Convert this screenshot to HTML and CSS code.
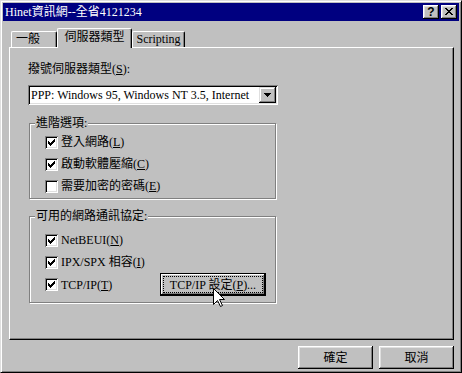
FILE: index.html
```html
<!DOCTYPE html>
<html lang="zh-Hant">
<head>
    <meta charset="UTF-8">
    <title>Hinet資訊網--全省4121234</title>
    <link rel="stylesheet" href="styles.css">
</head>
<body>
    <div class="window">
        <div class="titlebar">
            <span class="title">Hinet資訊網--全省4121234</span>
            <div class="caption-btns">
                <span class="cap-btn help">?</span>
                <span class="cap-btn">
                    <svg width="8" height="7" viewBox="0 0 8 7" shape-rendering="crispEdges">
                        <path d="M0 0h2v1h-2z M6 0h2v1h-2z M1 1h2v1h-2z M5 1h2v1h-2z M2 2h4v1h-4z M3 3h2v1h-2z M2 4h4v1h-4z M1 5h2v1h-2z M5 5h2v1h-2z M0 6h2v1h-2z M6 6h2v1h-2z" fill="#000"/>
                    </svg>
                </span>
            </div>
        </div>

        <div class="content">
            <!-- tab strip -->
            <div class="tabs">
                <div class="tab first">一般</div>
                <div class="tab active">伺服器類型</div>
                <div class="tab last">Scripting</div>
            </div>

            <div class="panel">
                <div class="field-label">撥號伺服器類型(<u>S</u>):</div>
                <div class="combo">
                    <span class="combo-text">PPP: Windows 95, Windows NT 3.5, Internet</span>
                    <span class="combo-btn">
                        <svg width="7" height="4" viewBox="0 0 7 4" shape-rendering="crispEdges">
                            <path d="M0 0h7v1h-7z M1 1h5v1h-5z M2 2h3v1h-3z M3 3h1v1h-1z" fill="#000"/>
                        </svg>
                    </span>
                </div>

                <div class="group group-adv">
                    <span class="legend">進階選項:</span>
                    <div class="row"><span class="check on"></span>登入網路(<u>L</u>)</div>
                    <div class="row"><span class="check on"></span>啟動軟體壓縮(<u>C</u>)</div>
                    <div class="row"><span class="check"></span>需要加密的密碼(<u>E</u>)</div>
                </div>

                <div class="group group-proto">
                    <span class="legend">可用的網路通訊協定:</span>
                    <div class="row"><span class="check on"></span>NetBEUI(<u>N</u>)</div>
                    <div class="row"><span class="check on"></span>IPX/SPX 相容(<u>I</u>)</div>
                    <div class="row">
                        <span class="check on"></span>TCP/IP(<u>T</u>)
                        <span class="btn default">TCP/IP 設定(<u>P</u>)...</span>
                    </div>
                </div>
            </div>

            <div class="actions">
                <span class="btn">確定</span>
                <span class="btn">取消</span>
            </div>
        </div>

        <!-- mouse pointer -->
        <svg class="cursor" width="13" height="20" viewBox="0 0 13 20">
            <polygon points="0.5,0.5 0.5,16.5 4.5,12.5 7.5,18.5 9.5,17.5 6.5,11.5 11.5,11.5" fill="#fff" stroke="#000" stroke-width="1"/>
        </svg>
    </div>
</body>
</html>
```

FILE: styles.css
```css
body {
    margin: 0;
    background: #c0c0c0;
    font-family: "Liberation Serif", "Noto Sans CJK TC", serif;
    font-size: 12px;
    line-height: 14px;
    color: #000;
}

.window {
    position: relative;
    width: 462px;
    height: 373px;
    box-sizing: border-box;
    border: 1px solid;
    border-color: #dfdfdf #000 #000 #dfdfdf;
    box-shadow: inset 1px 1px #fff, inset -1px -1px #808080;
    padding: 2px;
    background: #c0c0c0;
}

.titlebar {
    height: 18px;
    background: #000080;
    color: #fff;
    display: flex;
    align-items: center;
    justify-content: space-between;
    padding: 0 2px;
}

.caption-btns {
    display: flex;
    gap: 2px;
}

.cap-btn {
    width: 16px;
    height: 14px;
    box-sizing: border-box;
    background: #c0c0c0;
    box-shadow: inset -1px -1px #000, inset 1px 1px #fff, inset -2px -2px #808080, inset 2px 2px #dfdfdf;
    display: flex;
    align-items: center;
    justify-content: center;
    padding-bottom: 1px;
}

.help {
    color: #000;
    font-family: "Liberation Sans", sans-serif;
    font-weight: bold;
    font-size: 12px;
}

.content {
    padding: 7px 5px 0 6px;
}

/* tabs */
.tabs {
    display: flex;
    align-items: flex-end;
    height: 20px;
    padding-left: 2px;
    margin-bottom: -1px;
    position: relative;
    z-index: 1;
}

.tab {
    height: 16px;
    box-sizing: border-box;
    margin-bottom: 1px;
    border-top: 1px solid #fff;
    border-left: 1px solid #fff;
    border-right: 1px solid #000;
    border-radius: 2px 2px 0 0;
    box-shadow: inset -1px 0 #808080;
    background: #c0c0c0;
    text-align: center;
    white-space: nowrap;
}

.tab.first {
    width: 46px;
    text-align: left;
    padding-left: 4px;
}

.tab.active {
    width: 75px;
    height: 20px;
    margin-bottom: 0;
    padding-top: 1px;
}

.tab.last {
    width: 53px;
}

/* tab page */
.panel {
    height: 293px;
    box-sizing: border-box;
    border: 1px solid;
    border-color: #fff #000 #000 #fff;
    box-shadow: inset -1px -1px #808080;
    padding: 14px 0 0 18px;
}

.combo {
    margin-top: 9px;
    width: 250px;
    height: 20px;
    box-sizing: border-box;
    padding: 2px;
    background: #fff;
    box-shadow: inset 1px 1px #808080, inset -1px -1px #fff, inset 2px 2px #000, inset -2px -2px #dfdfdf;
    display: flex;
    align-items: center;
}

.combo-text {
    flex: 1;
    padding-left: 1px;
    white-space: nowrap;
    overflow: hidden;
}

.combo-btn {
    width: 17px;
    height: 16px;
    box-sizing: border-box;
    background: #c0c0c0;
    box-shadow: inset -1px -1px #000, inset 1px 1px #dfdfdf, inset -2px -2px #808080, inset 2px 2px #fff;
    display: flex;
    align-items: center;
    justify-content: center;
}

.group {
    position: relative;
    width: 247px;
    margin-left: 1px;
    box-sizing: border-box;
    border: 1px solid #808080;
    box-shadow: inset 1px 1px #fff, 1px 1px #fff;
    padding-left: 15px;
}

.group-adv {
    margin-top: 18px;
    height: 76px;
    padding-top: 7px;
}

.group-proto {
    margin-top: 17px;
    height: 87px;
    padding-top: 12px;
}

.legend {
    position: absolute;
    top: -8px;
    left: 5px;
    padding: 0 1px;
    background: #c0c0c0;
    white-space: nowrap;
}

.row {
    display: flex;
    align-items: center;
    min-height: 22px;
    white-space: nowrap;
}

.check {
    width: 13px;
    height: 13px;
    margin-right: 3px;
    flex-shrink: 0;
    background: #fff;
    box-shadow: inset 1px 1px #808080, inset -1px -1px #fff, inset 2px 2px #000, inset -2px -2px #dfdfdf;
}

.check.on {
    background: #fff url("data:image/svg+xml,%3Csvg xmlns='http://www.w3.org/2000/svg' width='13' height='13' shape-rendering='crispEdges'%3E%3Cpath d='M3 5h1v3h-1z M4 6h1v3h-1z M5 7h1v3h-1z M6 6h1v3h-1z M7 5h1v3h-1z M8 4h1v3h-1z M9 3h1v3h-1z' fill='%23000'/%3E%3C/svg%3E") no-repeat;
}

/* push buttons */
.btn {
    width: 75px;
    height: 23px;
    box-sizing: border-box;
    display: flex;
    align-items: center;
    justify-content: center;
    background: #c0c0c0;
    box-shadow: inset -1px -1px #000, inset 1px 1px #fff, inset -2px -2px #808080, inset 2px 2px #dfdfdf;
    white-space: nowrap;
}

.btn.default {
    width: 106px;
    margin-left: auto;
    margin-right: 9px;
    border: 1px solid #000;
    box-shadow: inset -1px -1px #000, inset 1px 1px #fff, inset -2px -2px #808080;
    outline: 1px dotted #000;
    outline-offset: -4px;
}

.actions {
    display: flex;
    justify-content: flex-end;
    gap: 6px;
    margin-top: 6px;
}

.cursor {
    position: absolute;
    left: 212px;
    top: 287px;
}
```
